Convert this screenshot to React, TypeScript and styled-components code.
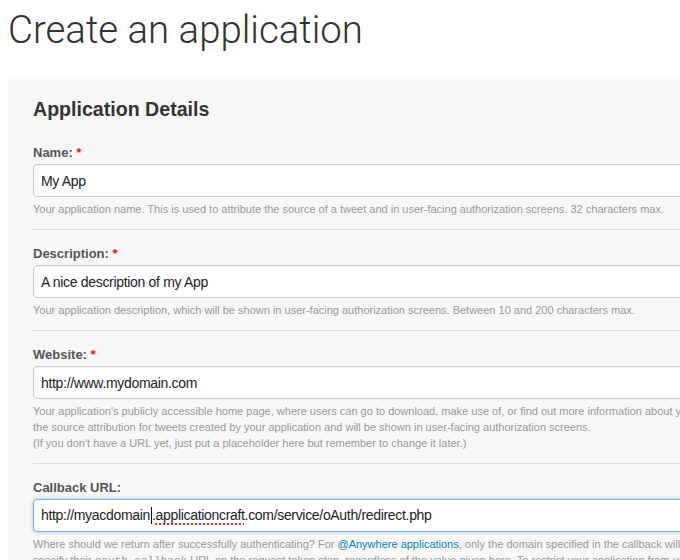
import React from "react";
import styled, { createGlobalStyle } from "styled-components";

const GlobalStyle = createGlobalStyle`
  html, body {
    margin: 0;
    padding: 0;
    background: #ffffff;
    overflow: hidden;
  }
  body {
    font-family: "Liberation Sans", Arial, Helvetica, sans-serif;
    color: #333333;
  }
`;

const Page = styled.div`
  width: 680px;
  height: 560px;
  overflow: hidden;
  padding-left: 8px;
  box-sizing: border-box;
`;

const Title = styled.h1`
  margin: 9px 0 27px 0;
  font-family: Roboto, "Liberation Sans", sans-serif;
  font-weight: 300;
  font-size: 38.4px;
  line-height: 42px;
  color: #333333;
  white-space: nowrap;
`;

const Panel = styled.section`
  width: 800px;
  background: #f7f7f7;
  border-radius: 4px;
  padding: 19px 25px 20px 25px;
  box-sizing: border-box;
`;

const PanelHeading = styled.h2`
  margin: 0 0 8px 0;
  font-size: 19.6px;
  line-height: 24px;
  font-weight: 700;
  color: #333333;
`;

const FieldGroup = styled.div<{ $last?: boolean }>`
  padding: 15px 0 12px 0;
  border-bottom: ${(p) => (p.$last ? "none" : "1px solid #dddddd")};
`;

const Label = styled.label`
  display: block;
  margin-bottom: 2px;
  font-size: 13px;
  line-height: 18px;
  font-weight: 700;
  color: #555555;
`;

const Required = styled.span`
  color: #ee1111;
`;

const TextBox = styled.div<{ $focused?: boolean }>`
  height: 33px;
  box-sizing: border-box;
  padding: 0 7px;
  display: flex;
  align-items: center;
  background: #ffffff;
  border: 1px solid ${(p) => (p.$focused ? "#7db3e3" : "#cccccc")};
  border-radius: 4px;
  box-shadow: ${(p) =>
    p.$focused
      ? "0 0 4px rgba(82, 168, 236, 0.55)"
      : "inset 0 1px 1px rgba(0, 0, 0, 0.05)"};
  font-size: 14px;
  letter-spacing: -0.32px;
  color: #222222;
  white-space: nowrap;
`;

const Caret = styled.span`
  display: inline-block;
  width: 1px;
  height: 17px;
  margin-left: 1px;
  background: #111111;
  vertical-align: -4px;
`;

const Misspelt = styled.span`
  text-decoration: underline dotted #e0302a;
  text-decoration-thickness: 2px;
  text-underline-offset: 3px;
`;

const Help = styled.p`
  margin: 4px 0 0 0;
  font-size: 11px;
  line-height: 16px;
  color: #999999;
  white-space: nowrap;
`;

const HelpLink = styled.a`
  color: #0084b4;
  text-decoration: none;
`;

const Code = styled.code`
  font-family: "Liberation Mono", "DejaVu Sans Mono", monospace;
  font-size: 11px;
  color: #999999;
`;

export default function App() {
  return (
    <>
      <GlobalStyle />
      <Page>
        <Title>Create an application</Title>
        <Panel>
          <PanelHeading>Application Details</PanelHeading>

          <FieldGroup>
            <Label>
              Name: <Required>*</Required>
            </Label>
            <TextBox>My App</TextBox>
            <Help>
              Your application name. This is used to attribute the source of a
              tweet and in user-facing authorization screens. 32 characters
              max.
            </Help>
          </FieldGroup>

          <FieldGroup>
            <Label>
              Description: <Required>*</Required>
            </Label>
            <TextBox>A nice description of my App</TextBox>
            <Help>
              Your application description, which will be shown in user-facing
              authorization screens. Between 10 and 200 characters max.
            </Help>
          </FieldGroup>

          <FieldGroup>
            <Label>
              Website: <Required>*</Required>
            </Label>
            <TextBox>http://www.mydomain.com</TextBox>
            <Help>
              Your application's publicly accessible home page, where users can
              go to download, make use of, or find out more information about
              your application. This fully-qualified URL is used in
              <br />
              the source attribution for tweets created by your application and
              will be shown in user-facing authorization screens.
              <br />
              (If you don't have a URL yet, just put a placeholder here but
              remember to change it later.)
            </Help>
          </FieldGroup>

          <FieldGroup $last>
            <Label>Callback URL:</Label>
            <TextBox $focused>
              <span>
                http://myacdomain
                <Caret />
                .<Misspelt>applicationcraft</Misspelt>.com/service/oAuth/redirect.php
              </span>
            </TextBox>
            <Help>
              Where should we return after successfully authenticating? For{" "}
              <HelpLink href="#">@Anywhere applications</HelpLink>, only the
              domain specified in the callback will be used. OAuth 1.0a
              applications should explicitly
              <br />
              specify their <Code>oauth_callback</Code> URL on the request token
              step, regardless of the value given here. To restrict your
              application from using callbacks, leave this field blank.
            </Help>
          </FieldGroup>
        </Panel>
      </Page>
    </>
  );
}
